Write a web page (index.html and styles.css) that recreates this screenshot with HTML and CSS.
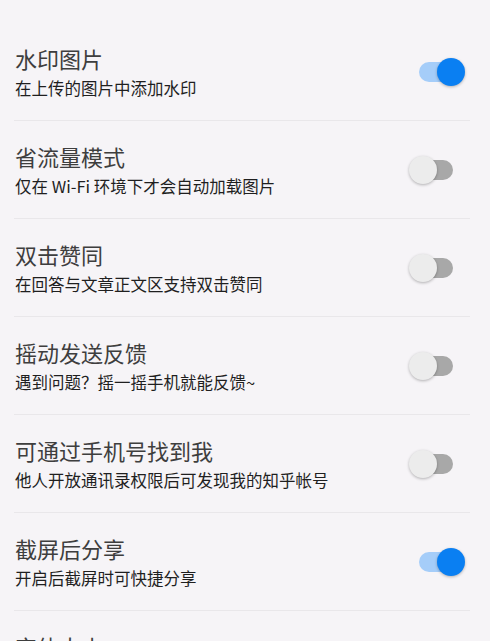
FILE: index.html
```html
<!DOCTYPE html>
<html lang="zh-CN">
<head>
<meta charset="utf-8">
<title>设置</title>
<link rel="stylesheet" href="styles.css">
</head>
<body>
<div class="list">
  <div class="row">
    <div class="text">
      <div class="title">水印图片</div>
      <div class="sub">在上传的图片中添加水印</div>
    </div>
    <div class="switch on"><span class="track"></span><span class="thumb"></span></div>
  </div>
  <div class="row">
    <div class="text">
      <div class="title">省流量模式</div>
      <div class="sub">仅在 Wi-Fi 环境下才会自动加载图片</div>
    </div>
    <div class="switch"><span class="track"></span><span class="thumb"></span></div>
  </div>
  <div class="row">
    <div class="text">
      <div class="title">双击赞同</div>
      <div class="sub">在回答与文章正文区支持双击赞同</div>
    </div>
    <div class="switch"><span class="track"></span><span class="thumb"></span></div>
  </div>
  <div class="row">
    <div class="text">
      <div class="title">摇动发送反馈</div>
      <div class="sub">遇到问题？摇一摇手机就能反馈~</div>
    </div>
    <div class="switch"><span class="track"></span><span class="thumb"></span></div>
  </div>
  <div class="row">
    <div class="text">
      <div class="title">可通过手机号找到我</div>
      <div class="sub">他人开放通讯录权限后可发现我的知乎帐号</div>
    </div>
    <div class="switch"><span class="track"></span><span class="thumb"></span></div>
  </div>
  <div class="row">
    <div class="text">
      <div class="title">截屏后分享</div>
      <div class="sub">开启后截屏时可快捷分享</div>
    </div>
    <div class="switch on"><span class="track"></span><span class="thumb"></span></div>
  </div>
  <div class="row">
    <div class="text">
      <div class="title">字体大小</div>
      <div class="sub">调整正文字体大小</div>
    </div>
  </div>
</div>
</body>
</html>
```

FILE: styles.css
```css
html, body {
  margin: 0;
  padding: 0;
  height: 100%;
  overflow: hidden;
}
body {
  background: #f6f4f7;
  font-family: "Noto Sans CJK SC", "Noto Sans", sans-serif;
}
.list {
  padding: 23px 20px 0 14px;
}
.row {
  display: flex;
  align-items: center;
  justify-content: space-between;
  padding: 21px 0 21px 1px;
  border-bottom: 1px solid #e9e7ea;
}
.text {
  display: flex;
  flex-direction: column;
}
.title {
  font-size: 22px;
  line-height: 28px;
  color: #3e3e3e;
}
.sub {
  margin-top: 5px;
  font-size: 16.5px;
  line-height: 22px;
  color: #1f1f1f;
}
.switch {
  position: relative;
  width: 56px;
  height: 28px;
  margin-right: 5px;
  flex-shrink: 0;
}
.track {
  position: absolute;
  left: 10px;
  top: 4px;
  width: 34px;
  height: 20px;
  border-radius: 10px;
  background: #a8a8a8;
}
.thumb {
  position: absolute;
  left: 0;
  top: 0;
  width: 28px;
  height: 28px;
  border-radius: 50%;
  background: #ececec;
  box-shadow: 0 1px 3px rgba(0, 0, 0, 0.28);
}
.switch.on .track {
  background: #a5cdf9;
}
.switch.on .thumb {
  left: 28px;
  background: #0a7ff2;
}
```
